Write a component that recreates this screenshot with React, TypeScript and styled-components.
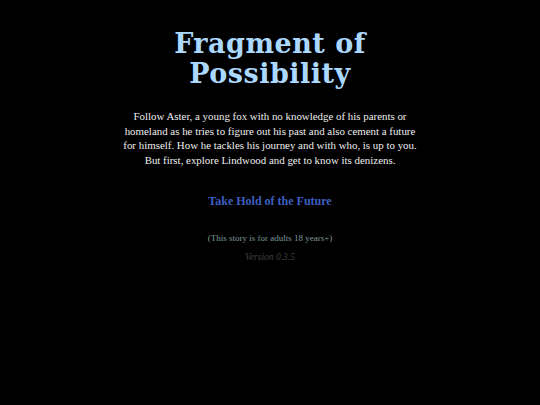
import React from "react";
import styled, { createGlobalStyle } from "styled-components";

const Global = createGlobalStyle`
  html, body { margin: 0; padding: 0; background: #000; }
  body { font-family: "Liberation Serif", Georgia, serif; }
`;

const Page = styled.main`
  min-height: 405px;
  background: #000;
  display: flex;
  flex-direction: column;
  align-items: center;
  padding-top: 29px;
  box-sizing: border-box;
`;

const Title = styled.h1`
  margin: 0;
  width: 300px;
  text-align: center;
  font-family: "DejaVu Serif", Georgia, serif;
  font-weight: bold;
  font-size: 27px;
  letter-spacing: 0.5px;
  line-height: 30px;
  color: #aad8ff;
`;

const Blurb = styled.p`
  margin: 20px 0 0;
  width: 302px;
  text-align: center;
  font-family: "Liberation Serif", Georgia, serif;
  font-size: 10.9px;
  line-height: 14.7px;
  color: #eeeeee;
`;

const StartLink = styled.a`
  margin-top: 26px;
  font-weight: bold;
  font-size: 12px;
  line-height: 14px;
  color: #3d5fc0;
  text-decoration: none;
  cursor: pointer;
`;

const Note = styled.p<{ $tone: string; $italic?: boolean; $size: number }>`
  margin: 0;
  font-size: ${(p) => p.$size}px;
  line-height: 14px;
  color: ${(p) => p.$tone};
  font-style: ${(p) => (p.$italic ? "italic" : "normal")};
`;

const Notes = styled.div`
  margin-top: 23px;
  display: flex;
  flex-direction: column;
  align-items: center;
  gap: 5px;
`;

export default function App() {
  return (
    <>
      <Global />
      <Page>
        <Title>Fragment of Possibility</Title>
        <Blurb>
          Follow Aster, a young fox with no knowledge of his parents or homeland as he tries to figure
          out his past and also cement a future for himself. How he tackles his journey and with who, is
          up to you. But first, explore Lindwood and get to know its denizens.
        </Blurb>
        <StartLink>Take Hold of the Future</StartLink>
        <Notes>
          <Note $tone="#7f9a98" $size={9}>(This story is for adults 18 years+)</Note>
          <Note $tone="#404040" $size={9.5} $italic>Version 0.3.5</Note>
        </Notes>
      </Page>
    </>
  );
}
